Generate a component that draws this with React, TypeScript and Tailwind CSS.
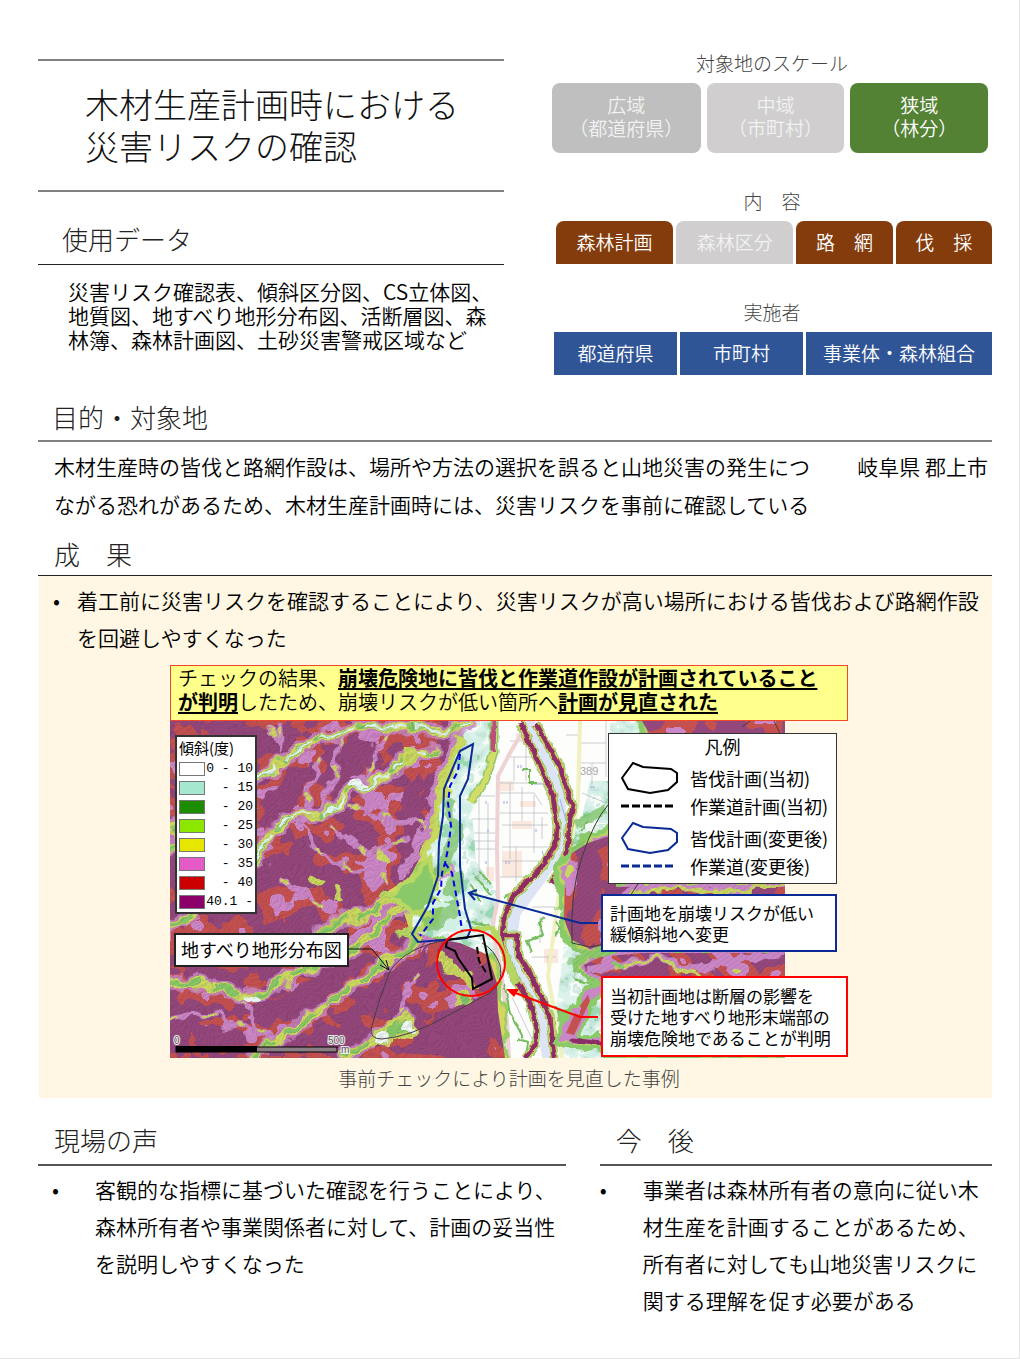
import React from 'react';

const purposeLines = [
  '木材生産時の皆伐と路網作設は、場所や方法の選択を誤ると山地災害の発生につ',
  'ながる恐れがあるため、木材生産計画時には、災害リスクを事前に確認している',
];

const slopes = [
  { label: '0 - 10', swatch: 'bg-white' },
  { label: '- 15', swatch: 'bg-[#a5e8d0]' },
  { label: '- 20', swatch: 'bg-[#1e8c00]' },
  { label: '- 25', swatch: 'bg-[#8ce600]' },
  { label: '- 30', swatch: 'bg-[#e6e600]' },
  { label: '- 35', swatch: 'bg-[#e65ac8]' },
  { label: '- 40', swatch: 'bg-[#cc0000]' },
  { label: '40.1 -', swatch: 'bg-[#8c0069]' },
];

function Lines({ lines }: { lines: string[] }) {
  return (
    <>
      {lines.map((line) => (
        <span key={line} className="block whitespace-nowrap">
          {line}
        </span>
      ))}
    </>
  );
}

function Heading({ children, className }: { children: React.ReactNode; className: string }) {
  return (
    <h2 className={`text-[26px] leading-8 font-light text-[#222] whitespace-pre ${className}`}>{children}</h2>
  );
}

function GroupLabel({ children }: { children: React.ReactNode }) {
  return <h3 className="text-center text-[19px] leading-6 font-light whitespace-pre text-[#444]">{children}</h3>;
}

const valleys = [
  'M78 66 L92 54 L110 42 L132 26 L150 18 L172 10 L190 6 L240 6 L270 9 L300 6',
  'M88 145 L100 112 L115 96 L150 94 L168 82 L180 66 L192 66 L215 57 L232 42 L262 28',
  'M150 212 L168 200 L200 193 L222 176 L245 163 L275 150',
  'M0 262 L30 264 L55 268 L80 276 L104 264 L128 250 L165 240 L190 222 L222 192 L245 184',
  'M85 337 L105 320 L128 306 L150 288 L180 266 L205 252 L222 236 L250 218',
  'M176 337 L200 322 L220 308 L236 296',
  'M0 206 L14 200 L26 190',
  'M0 130 L8 120 L3 104',
];

const minorRidges = [
  'M170 14 L162 60 L152 88 L140 96',
  'M150 38 L140 70 L138 96',
  'M216 12 L205 34 L200 58 L184 54',
  'M125 96 L140 115 L158 138 L185 148 L214 160',
  'M178 86 L206 95 L240 100 L262 108',
  'M160 108 L186 122 L206 132 L240 118',
  'M114 160 L140 176 L165 190',
  'M0 298 L30 292 L48 294 L60 304 L84 308 L104 320',
  'M70 278 L88 306 L104 318',
  'M100 8 L112 26 L104 2',
  'M245 255 L236 275 L232 290',
];

const leftBank = 'M350 2 L367 38 L383 75 L387 105 L386 122 L373 145 L343 175 L333 202 L332 225';
const rightBank = 'M366 3 L377 23 L390 45 L398 72 L403 85 L400 98 L398 122 L393 145 L381 162';
const lowerLeftBank = 'M331 222 L343 255 L360 282 L367 308 L365 325 L356 337';
const lowerRightBank = 'M334 214 L347 214 L349 235 L363 258 L380 295 L384 337';
const river = 'M358 0 L388 70 L392 122 L371 155 L344 192 L341 215 L350 248 L371 295 L379 337';

function SlopeMap() {
  return (
    <svg viewBox="0 0 615 337" className="block h-[337px] w-[615px]" role="img" aria-label="傾斜区分図">
      <defs>
        <filter id="rough" x="-10%" y="-10%" width="120%" height="120%">
          <feTurbulence type="fractalNoise" baseFrequency="0.05" numOctaves="3" seed="4" result="n" />
          <feDisplacementMap in="SourceGraphic" in2="n" scale="20" xChannelSelector="R" yChannelSelector="G" />
        </filter>
        <filter id="bank" x="-10%" y="-10%" width="120%" height="120%">
          <feTurbulence type="fractalNoise" baseFrequency="0.12" numOctaves="2" seed="9" result="n" />
          <feDisplacementMap in="SourceGraphic" in2="n" scale="5" xChannelSelector="R" yChannelSelector="G" />
        </filter>
        <filter id="slope" x="0" y="0" width="100%" height="100%" colorInterpolationFilters="sRGB">
          <feTurbulence type="fractalNoise" baseFrequency="0.026 0.03" numOctaves="3" seed="23" />
          <feColorMatrix values="1 0 0 0 0  1 0 0 0 0  1 0 0 0 0  0 0 0 0 1" />
          <feComponentTransfer result="c">
            <feFuncR
              type="discrete"
              tableValues=".58 .58 .58 .58 .58 .58 .58 .58 .58 .58 .77 .77 .77 .8 .8 .8 .79 .79 .5 .5"
            />
            <feFuncG
              type="discrete"
              tableValues=".28 .28 .28 .28 .28 .28 .28 .28 .28 .28 .32 .32 .32 .53 .53 .53 .84 .84 .76 .76"
            />
            <feFuncB
              type="discrete"
              tableValues=".48 .48 .48 .48 .48 .48 .48 .48 .48 .48 .31 .31 .31 .78 .78 .78 .38 .38 .42 .42"
            />
          </feComponentTransfer>
          <feComposite in="c" in2="SourceGraphic" operator="in" />
        </filter>
        <filter id="plain" x="0" y="0" width="100%" height="100%" colorInterpolationFilters="sRGB">
          <feTurbulence type="fractalNoise" baseFrequency="0.06" numOctaves="3" seed="5" />
          <feColorMatrix values="1 0 0 0 0  1 0 0 0 0  1 0 0 0 0  0 0 0 0 1" />
          <feComponentTransfer result="c">
            <feFuncR type="discrete" tableValues=".6 .6 .6 .78 .82 .87 .97 .8 .9 .9" />
            <feFuncG type="discrete" tableValues=".85 .85 .85 .9 .94 .95 .99 .92 .95 .95" />
            <feFuncB type="discrete" tableValues=".7 .7 .7 .85 .9 .92 .98 .88 .9 .9" />
          </feComponentTransfer>
          <feComposite in="c" in2="SourceGraphic" operator="in" />
        </filter>
        <pattern id="contour" width="48" height="4" patternUnits="userSpaceOnUse" patternTransform="rotate(-38)">
          <path d="M0 1 Q12 3 24 1 T48 1" fill="none" stroke="#3b1538" strokeWidth="1" />
        </pattern>
        <clipPath id="frame">
          <rect width="615" height="337" />
        </clipPath>
        <clipPath id="mountains">
          <path d="M0 0 H285 L292 12 L280 40 L268 75 L264 110 L256 125 L240 156 L215 172 L232 186 L240 210 L262 217 L290 222 L318 234 L327 262 L328 290 L335 337 H0 Z" />
        </clipPath>
      </defs>

      <g clipPath="url(#frame)">
        <rect width="615" height="337" fill="#fdfdfc" />

        {/* gentle ground around the streams */}
        <g filter="url(#plain)">
          <path d="M240 0 H328 L322 40 L302 90 L306 140 L326 170 L325 210 L330 240 H230 L200 170 Z" />
          <path d="M420 60 L440 60 V220 L480 337 H392 L386 290 L396 210 L398 180 L396 110 L412 96 Z" />
          <path d="M440 0 L480 0 V30 H440 Z" />
        </g>

        {/* town blocks and roads */}
        <g fill="#fbe9df">
          <path d="M330 60 h14 v10 h-14 z M366 28 h12 v12 h-12 z M342 100 h20 v8 h-20 z M332 130 h20 v26 h-20 z M316 146 h8 v14 h-8 z M346 12 h12 v8 h-12 z M350 80 h16 v6 h-16 z M374 228 h14 v14 h-14 z" />
        </g>
        <path
          d="M300 75 H325 M302 98 H326 M304 112 H326 M302 120 H326 M306 128 H326 M309 75 V160 M318 82 V156 M330 62 H372 L384 86 M330 72 H364 L372 84 M330 92 H378 M332 104 H378 M340 62 V138 M352 66 V100 M364 74 V132 M372 96 V118 M332 126 H382 M332 140 H372 M346 126 V160 M330 156 H354 M340 20 H356 M338 36 H362 M344 36 V60 M356 20 V60 M410 0 V60 M436 0 V56 M410 22 H436 M410 42 H436 M396 14 H410 M422 42 V64 M412 72 L436 82 M348 186 V206 M362 186 H388 M370 196 V222 M378 234 V262 M362 236 H386 M342 276 L362 318"
          fill="none"
          stroke="#b5b9bd"
          strokeWidth="1"
          opacity=".7"
        />
        <path
          d="M334 80 v3 M337 80 v3 M316 80 v3 M348 44 v3 M351 44 v3 M318 108 v3 M366 108 v3 M336 140 v3 M339 140 v3 M316 140 v3 M420 66 h5 M364 63 h8"
          stroke="#a7a4ea"
        />
        <path d="M410 0 L408 80 L400 130 L388 180 L378 255 L386 300 L392 337" fill="none" stroke="#f0f0c0" strokeWidth="4" />
        <path
          d="M354 8 L340 32 L328 55 L327 128 L328 178 L322 208 L331 248 L337 300 L339 337"
          fill="none"
          stroke="#efd3d4"
          strokeWidth="4"
        />
        <text x="410" y="54" fontSize="11" fill="#a9a9a9" className="font-['Liberation_Sans']">
          389
        </text>

        {/* green fringes on the plain */}
        <g filter="url(#bank)" fill="none" stroke="#74bd5c" strokeWidth="2">
          <path d="M352 48 h8 v14 h6 M334 176 L356 166 M375 196 l-6 6 l4 12 l-16 6 l4 12 M386 200 l14 24 l16 6 M396 190 l-10 26 M404 258 l22 6 M334 262 l6 30 l14 26 M348 318 l10 4 l-2 12 M384 285 l14 20 l20 18 M400 318 l34 10 M418 100 l-8 10 M300 162 l12 20 M306 156 l14 18 M310 150 l12 14 M296 200 l24 4" />
          <path d="M405 104 L436 88" strokeWidth="9" opacity=".7" />
          <path d="M398 240 L432 246" strokeWidth="8" opacity=".55" />
        </g>

        {/* river and its banks */}
        <path d={river} fill="none" stroke="#dde4f5" strokeWidth="13" />
        <path d="M372 130 L376 142 L352 166 M390 78 L396 100" fill="none" stroke="#9fb2e6" />
        <g filter="url(#bank)" fill="none">
          {[leftBank, rightBank, lowerLeftBank, lowerRightBank].map((d) => (
            <React.Fragment key={d}>
              <path d={d} stroke="#8fcb68" strokeWidth="9" />
              <path d={d} stroke="#d9d766" strokeWidth="7" />
              <path d={d} stroke="#bd4a62" strokeWidth="5" />
              <path d={d} stroke="#8a2f66" strokeWidth="4" />
            </React.Fragment>
          ))}
          <path d="M324 0 L324 30 L316 58 L301 80" stroke="#8cc866" strokeWidth="9" />
          <path d="M324 0 L324 30 L316 58 L301 80" stroke="#d4dc68" strokeWidth="6" />
          <path d="M324 0 L323 30" stroke="#b84f7e" strokeWidth="5" />
          <path d="M302 208 L322 207 L336 236 L346 262" stroke="#b7d860" strokeWidth="6" />
        </g>

        {/* eastern hills */}
        <g filter="url(#rough)">
          <path
            d="M390 150 L398 126 L416 116 L438 106 H446 V230 L420 236 L400 226 L388 200 Z M436 158 H630 V200 H436 Z M406 244 L420 232 L470 226 H630 V262 H430 L412 256 Z M462 -12 H630 V20 H474 Z M388 320 L400 290 L416 268 L440 258 V270 L418 282 L408 316 H440 V332 L400 326 Z M440 334 H630 V350 H440 Z"
            fill="#b6d660"
            stroke="#8bca68"
            strokeWidth="6"
          />
        </g>
        <g filter="url(#rough)">
          <path
            d="M396 150 L404 130 L420 120 L436 114 H446 V222 L420 228 L404 220 L396 200 Z M440 162 H630 V200 H440 Z M412 244 L424 236 L470 228 H630 V260 H430 L414 252 Z M468 -12 H630 V20 H480 Z M392 316 L402 290 L418 270 L440 262 V268 L416 280 L404 318 H440 V326 L400 322 Z"
            fill="#c987c6"
          />
        </g>
        <g filter="url(#slope)">
          <path d="M395 152 L402 132 L418 122 L436 116 H446 V220 L420 228 L402 219 L394 198 Z M446 166 H615 V186 H446 Z M414 244 L430 236 L470 232 H615 V257 H434 L416 250 Z M472 0 H615 V14 H480 Z M396 312 L406 290 L418 274 L420 280 L404 314 Z" />
        </g>
        <path d="M408 134 L424 124 L432 140 L430 186 L414 204 L406 180 Z" fill="#94477a" filter="url(#bank)" />
        <g filter="url(#rough)" fill="none">
          <path
            d="M444 182 L470 168 L520 166 L560 172 L625 158 M420 250 L450 244 L490 238 L530 248 L580 236 L625 230"
            stroke="#c987c6"
            strokeWidth="8"
          />
          <path
            d="M444 186 L470 172 L520 168 L556 174 L625 162 M440 250 L452 244 L490 238 L512 246 L530 256"
            stroke="#c9d660"
            strokeWidth="4"
          />
          <path d="M442 244 h14" stroke="#8bca68" strokeWidth="5" />
          <path d="M400 318 L440 325" stroke="#8a2f66" strokeWidth="5" />
        </g>
        <path
          d="M438 84 Q424 100 412 136 Q400 170 402 222 L420 226 L440 222 M468 163 L458 178 M572 6 L580 0 M604 0 l6 12"
          fill="none"
          stroke="#3c3c3c"
          strokeWidth="1"
        />

        {/* western hills */}
        <g filter="url(#rough)">
          <path
            d="M-10 -10 H292 L296 14 L284 44 L272 78 L270 110 L262 127 L246 160 L222 174 L240 186 L248 212 L268 219 L296 224 L324 236 L333 264 L334 292 L340 347 H-10 Z"
            fill="#9bce62"
          />
          <path
            d="M-10 -10 H286 L290 14 L278 44 L266 78 L264 110 L254 127 L240 160 L218 174 L234 186 L242 212 L264 222 L292 226 L320 238 L329 264 L330 292 L336 347 H-10 Z"
            fill="#d3d75f"
          />
        </g>
        <g clipPath="url(#mountains)">
          <rect width="340" height="337" filter="url(#slope)" />
          {/* steepest faces */}
          <g fill="#94477a" filter="url(#rough)">
            <path d="M92 76 L120 50 L150 40 L140 60 L126 90 L104 104 L90 100 Z M172 20 L190 14 L206 26 L216 56 L200 48 L186 28 Z M240 62 L252 54 L250 92 L232 96 L226 80 Z M150 150 L190 156 L196 180 L172 186 L150 172 Z M100 200 L150 212 L120 238 L80 248 L60 230 Z M110 270 L160 252 L176 256 L130 296 L100 300 Z M222 246 L262 226 L250 250 L214 284 L205 300 L196 280 Z M262 296 L316 276 L322 337 H250 Z M20 300 L70 312 L80 326 L30 330 Z" />
          </g>
        </g>
        <g filter="url(#rough)" fill="none" strokeLinejoin="round" strokeLinecap="round">
          <path d="M280 -5 L286 14 L274 44 L262 80 L258 108 L246 126 L236 152" stroke="#c987c6" strokeWidth="8" />
          <path d="M292 10 L280 46 L268 80 L262 118 L250 140" stroke="#c9d95f" strokeWidth="9" />
          {minorRidges.map((d) => (
            <path key={d} d={d} stroke="#c987c6" strokeWidth="5" />
          ))}
          {minorRidges.map((d) => (
            <path key={d} d={d} stroke="#cdd65f" strokeWidth="3" strokeDasharray="6 30" />
          ))}
          {valleys.map((d) => (
            <path key={d} d={d} stroke="#c987c6" strokeWidth="15" opacity=".85" />
          ))}
          {valleys.map((d) => (
            <path key={d} d={d} stroke="#ccd95f" strokeWidth="9" />
          ))}
          {valleys.map((d) => (
            <path key={d} d={d} stroke="#86c766" strokeWidth="5" strokeDasharray="26 18" />
          ))}
          {valleys.slice(0, 2).map((d) => (
            <path key={d} d={d} stroke="#dff3ea" strokeWidth="3" strokeDasharray="34 12" />
          ))}
          <path
            d="M215 172 L240 160 L262 138 L268 190 L246 216 L228 212 L262 200 Z"
            fill="#8ac96a"
            stroke="#b9d862"
            strokeWidth="5"
          />
          <path
            d="M222 300 L238 294 L246 306 L232 318 L206 324 Z"
            fill="#86c766"
            stroke="#c9d95f"
            strokeWidth="5"
          />
          <path d="M180 64 L190 60 M210 320 L218 314 M78 278 L86 276 M236 304 h3" stroke="#edf9f4" strokeWidth="8" />
          <path d="M142 158 L148 160 M170 172 v6 M208 134 L216 140 M240 34 v6 M242 196 v4" stroke="#c9d95f" strokeWidth="9" />
          <path d="M274 240 L286 246 L300 262" stroke="#c9d95f" strokeWidth="9" />
          <path
            d="M270 150 L284 120 L282 80 M262 200 L280 190 L284 160"
            stroke="#79c06a"
            strokeWidth="12"
            opacity=".75"
          />
          <path d="M258 190 L274 186 M272 206 L290 196 M266 172 L280 176" stroke="#d3f0e4" strokeWidth="8" />
        </g>
        <g clipPath="url(#mountains)" opacity=".16">
          <rect x="-30" y="-30" width="400" height="400" fill="url(#contour)" filter="url(#rough)" />
        </g>
        <rect x="402" y="120" width="213" height="140" fill="url(#contour)" opacity=".12" />

        {/* landslide outline */}
        <path
          d="M277 219 Q236 226 220 250 Q208 280 201 308 Q200 318 212 318 Q240 316 277 295 L320 272 Q334 262 330 244 Q324 228 312 222"
          fill="none"
          stroke="#4a3b45"
        />

        {/* scale bar */}
        <rect x="6" y="326" width="161" height="5" fill="#8b7f85" stroke="#000" strokeWidth="1" />
        <rect x="6" y="325" width="81" height="6" fill="#000" />
        <g
          fontSize="10"
          fill="#5f555b"
          stroke="#eee"
          strokeWidth="2"
          paintOrder="stroke"
          className="font-['Liberation_Sans']"
        >
          <text x="4" y="323">
            0
          </text>
          <text x="158" y="323">
            500
          </text>
          <text x="171" y="332">
            m
          </text>
        </g>
      </g>
    </svg>
  );
}

function PlanOverlay() {
  return (
    <svg viewBox="0 0 678 337" className="absolute inset-0 h-full w-full" fill="none" aria-hidden="true">
      <path
        d="M290 30 L303 23 L298 58 L290 75 L290 145 L295 188 L301 208 L297 217 L248 221 L242 213 L258 185 L268 155 L269 122 L273 95 L274 68 Z"
        stroke="#0a2a96"
        strokeWidth="2"
      />
      <path
        d="M290 33 L288 50 L280 65 L278 82 L281 105 L278 128 L275 142 L272 152 L271 168 L263 182 L263 198 L250 215 M275 142 L282 152 L285 168 L290 195 L292 210"
        stroke="#0000e6"
        strokeWidth="2"
        strokeDasharray="6 4"
      />
      <path
        d="M277 219 L313 214 L322 258 L303 268 L302 257 L288 237 L285 230 L276 226 Z"
        stroke="#000"
        strokeWidth="2"
      />
      <path d="M307 226 L309 240 L317 253" stroke="#000" strokeWidth="2" strokeDasharray="7 3" />
      <ellipse cx="301" cy="242" rx="34" ry="33" stroke="#f00" strokeWidth="2" />
      <path d="M179 228 L202 228 L219 249 M210 244 L219 249 L216 239" stroke="#111" />
      <path d="M428 202 H410 L299 172" stroke="#0a2a96" strokeWidth="2" />
      <path d="M307 169 L299 172 L305 179" stroke="#0a2a96" strokeWidth="2" />
      <path d="M428 296 H410 L340 270" stroke="#f00" strokeWidth="2" />
      <path d="M336 268 L349 268 L344 276 Z" fill="#f00" />
    </svg>
  );
}

function AreaSymbol({ color }: { color: string }) {
  return (
    <svg viewBox="0 0 58 34" className="h-[34px] w-[58px]" fill="none" aria-hidden="true">
      <path d="M12 2 L22 6 L50 8 L56 12 V21 L47 29 L29 32 L7 28 L1 17 Z" stroke={color} strokeWidth="2" />
    </svg>
  );
}

function PathSymbol({ color }: { color: string }) {
  return (
    <svg viewBox="0 0 58 4" className="h-1 w-[58px]" aria-hidden="true">
      <path d="M0 2 H52" stroke={color} strokeWidth="3" strokeDasharray="8 3" />
    </svg>
  );
}

function LegendRow({ symbol, children }: { symbol: React.ReactNode; children: React.ReactNode }) {
  return (
    <li className="grid h-[30px] grid-cols-[69px_1fr] items-center leading-7 whitespace-nowrap">
      {symbol}
      {children}
    </li>
  );
}

export default function App() {
  return (
    <div className="min-h-screen border-r border-b border-[#e4e4e4] bg-white pt-[59px] pr-[27px] pb-8 pl-[38px] font-['Noto_Sans_CJK_JP',sans-serif] font-[350] text-black">
      <header className="grid grid-cols-[466fr_440fr] gap-x-12">
        <div>
          <div className="border-y-2 border-[#808080] pt-[22px] pb-[23px] pl-[47px]">
            <h1 className="text-[34px] leading-[42px] font-light text-[#111]">
              <Lines lines={['木材生産計画時における', '災害リスクの確認']} />
            </h1>
          </div>
          <section className="mt-[31px]">
            <Heading className="border-b border-[#222] pb-[9px] pl-6">使用データ</Heading>
            <p className="mt-3.5 pl-[30px] text-[21px] leading-6">
              <Lines
                lines={[
                  '災害リスク確認表、傾斜区分図、CS立体図、',
                  '地質図、地すべり地形分布図、活断層図、森',
                  '林簿、森林計画図、土砂災害警戒区域など',
                ]}
              />
            </p>
          </section>
        </div>

        <div className="-mt-2">
          <GroupLabel>対象地のスケール</GroupLabel>
          <ul className="mt-2 grid grid-cols-[149fr_138fr_138fr] gap-x-1.5 pr-1 text-center text-[19px] leading-[23px] text-[#f2f2f2]">
            <li className="rounded-lg bg-[#bfbfbf] pt-2.5 pb-3.5">
              <Lines lines={['広域', '（都道府県）']} />
            </li>
            <li className="rounded-lg bg-[#d0cece] pt-2.5 pb-3.5">
              <Lines lines={['中域', '（市町村）']} />
            </li>
            <li className="rounded-lg bg-[#548235] pt-2.5 pb-3.5 text-white">
              <Lines lines={['狭域', '（林分）']} />
            </li>
          </ul>

          <div className="mt-9">
            <GroupLabel>内　容</GroupLabel>
          </div>
          <ul className="mt-2 grid grid-cols-[118fr_118fr_97fr_97fr] gap-x-[3px] pl-1 text-center text-[19px] leading-[41px] text-white">
            <li className="rounded-t-lg bg-[#843c0c] pb-0.5">森林計画</li>
            <li className="rounded-t-lg bg-[#d0cece] pb-0.5 text-[#f2f2f2]">森林区分</li>
            <li className="rounded-t-lg bg-[#843c0c] pb-0.5">路　網</li>
            <li className="rounded-t-lg bg-[#843c0c] pb-0.5">伐　採</li>
          </ul>

          <div className="mt-9">
            <GroupLabel>実施者</GroupLabel>
          </div>
          <ul className="mt-2 grid grid-cols-[123fr_123fr_186fr] gap-x-[3px] pl-0.5 text-center text-[19px] leading-[41px] text-white">
            <li className="bg-[#2f5597] pb-0.5">都道府県</li>
            <li className="bg-[#2f5597] pb-0.5">市町村</li>
            <li className="bg-[#2f5597] pb-0.5">事業体・森林組合</li>
          </ul>
        </div>
      </header>

      <section className="mt-[26px]">
        <Heading className="border-b-2 border-[#808080] pb-[7px] pl-3.5">目的・対象地</Heading>
        <div className="mt-[5px] flex justify-between pr-1 pl-4 text-[21px] leading-[38px]">
          <p>
            <Lines lines={purposeLines} />
          </p>
          <p className="whitespace-nowrap">岐阜県 郡上市</p>
        </div>
      </section>

      <section className="mt-[15px]">
        <Heading className="border-b border-[#222] pb-[5px] pl-4">成　果</Heading>
        <div className="ml-px bg-[#fff7e3] pb-2">
          <ul className="pt-1.5 pl-3.5 text-[21px] leading-[37px]">
            <li className="flex">
              <span className="w-6 shrink-0">•</span>
              <span>
                <Lines
                  lines={[
                    '着工前に災害リスクを確認することにより、災害リスクが高い場所における皆伐および路網作設',
                    'を回避しやすくなった',
                  ]}
                />
              </span>
            </li>
          </ul>

          <figure className="mt-[9px] ml-[131px] w-[678px]">
            <p className="border border-[#f2482a] bg-[#ffff8c] px-[7px] pb-1.5 text-xl leading-6">
              <span className="block whitespace-nowrap">
                チェックの結果、
                <strong className="underline underline-offset-2">崩壊危険地に皆伐と作業道作設が計画されていること</strong>
              </span>
              <span className="block whitespace-nowrap">
                <strong className="underline underline-offset-2">が判明</strong>
                したため、崩壊リスクが低い箇所へ
                <strong className="underline underline-offset-2">計画が見直された</strong>
              </span>
            </p>

            <div className="relative font-normal">
              <SlopeMap />
              <PlanOverlay />

              <div className="absolute top-3.5 left-[5px] w-[82px] border-2 border-[#333] bg-white px-0.5 pb-px">
                <p className="text-[15px] leading-[22px] whitespace-nowrap">傾斜(度)</p>
                <ul className="font-['Liberation_Mono',monospace] text-[13px] leading-[19px]">
                  {slopes.map((s) => (
                    <li key={s.label} className="flex items-center justify-between">
                      <span className={`h-3.5 w-[26px] shrink-0 border border-[#777] ${s.swatch}`} />
                      <span className="whitespace-pre">{s.label}</span>
                    </li>
                  ))}
                </ul>
              </div>

              <p className="absolute top-[212px] left-1 border-2 border-[#222] bg-white px-[5px] pb-0.5 text-lg leading-7 whitespace-nowrap">
                地すべり地形分布図
              </p>

              <div className="absolute top-3 left-[438px] w-[229px] border border-[#333] bg-white text-lg">
                <p className="pb-0.5 text-center leading-[25px]">凡例</p>
                <ul className="pb-0.5 pl-3">
                  <LegendRow symbol={<AreaSymbol color="#000" />}>皆伐計画(当初)</LegendRow>
                  <LegendRow symbol={<PathSymbol color="#000" />}>作業道計画(当初)</LegendRow>
                  <LegendRow symbol={<AreaSymbol color="#0a2a96" />}>皆伐計画(変更後)</LegendRow>
                  <LegendRow symbol={<PathSymbol color="#0a2a96" />}>作業道(変更後)</LegendRow>
                </ul>
              </div>

              <p className="absolute top-[173px] left-[431px] w-[236px] border-2 border-[#0a2a96] bg-white py-1.5 pl-[7px] text-[17px] leading-[21px]">
                <Lines lines={['計画地を崩壊リスクが低い', '緩傾斜地へ変更']} />
              </p>

              <p className="absolute top-[255px] left-[431px] w-[247px] border-2 border-[#f00] bg-white py-[7px] pl-[7px] text-[17px] leading-[21px]">
                <Lines
                  lines={['当初計画地は断層の影響を', '受けた地すべり地形末端部の', '崩壊危険地であることが判明']}
                />
              </p>
            </div>

            <figcaption className="mt-2 text-center text-[19px] leading-6 font-light text-[#444]">
              事前チェックにより計画を見直した事例
            </figcaption>
          </figure>
        </div>
      </section>

      <div className="mt-[26px] grid grid-cols-[529fr_393fr] gap-x-[34px]">
        <section>
          <Heading className="border-b-2 border-[#555] pb-2 pl-4">現場の声</Heading>
          <ul className="mt-[5px] pl-3.5 text-[21px] leading-[37px]">
            <li className="flex">
              <span className="w-[43px] shrink-0">•</span>
              <span>
                <Lines
                  lines={[
                    '客観的な指標に基づいた確認を行うことにより、',
                    '森林所有者や事業関係者に対して、計画の妥当性',
                    'を説明しやすくなった',
                  ]}
                />
              </span>
            </li>
          </ul>
        </section>
        <section>
          <Heading className="border-b-2 border-[#555] pb-2 pl-4">今　後</Heading>
          <ul className="mt-[5px] text-[21px] leading-[37px]">
            <li className="flex">
              <span className="w-[43px] shrink-0">•</span>
              <span>
                <Lines
                  lines={[
                    '事業者は森林所有者の意向に従い木',
                    '材生産を計画することがあるため、',
                    '所有者に対しても山地災害リスクに',
                    '関する理解を促す必要がある',
                  ]}
                />
              </span>
            </li>
          </ul>
        </section>
      </div>
    </div>
  );
}
